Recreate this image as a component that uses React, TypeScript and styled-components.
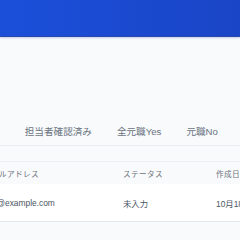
import styled, { createGlobalStyle } from "styled-components";

const Global = createGlobalStyle`
  html, body {
    margin: 0;
    padding: 0;
    background: #f8fafc;
    overflow: hidden;
  }
  body {
    font-family: "Liberation Sans", "Noto Sans CJK JP", sans-serif;
  }
`;

const Header = styled.header`
  height: 36px;
  background: linear-gradient(to right, #1b4fda, #1a45c6);
  border-bottom: 1px solid #2a4aa9;
  box-shadow: 0 1px 2px rgba(30, 64, 175, 0.25);
`;

const Main = styled.main`
  margin-left: -29px;
  width: 420px;
  padding-top: 88px;
`;

const Tabs = styled.nav`
  display: flex;
  column-gap: 25px;
  border-bottom: 1px solid #e8ebef;
`;

const Tab = styled.button<{ $active?: boolean }>`
  border: none;
  background: none;
  padding: 0 0 6px;
  font-family: inherit;
  font-size: 9.6px;
  line-height: 14px;
  white-space: nowrap;
  color: ${(p) => (p.$active ? "#1d4ed8" : "#6b7280")};
`;

const Card = styled.div`
  margin-top: 15px;
  background: #fff;
  border-top: 1px solid #eef0f3;
  border-bottom: 1px solid #e5e7eb;
`;

const Table = styled.table`
  border-collapse: collapse;
  table-layout: fixed;
  width: 420px;
`;

const Th = styled.th<{ $w: number }>`
  width: ${(p) => p.$w - 12}px;
  height: 22px;
  padding: 0 0 0 12px;
  background: #f9fafb;
  text-align: left;
  font-weight: 400;
  font-size: 7.6px;
  letter-spacing: 0.4px;
  color: #6b7280;
  white-space: nowrap;
`;

const Td = styled.td`
  height: 37px;
  padding: 0 0 0 12px;
  font-size: 8.4px;
  color: #4b5563;
  white-space: nowrap;
`;

export default function App() {
  return (
    <>
      <Global />
      <Header />
      <Main>
        <Tabs>
          <Tab>未確認</Tab>
          <Tab>担当者確認済み</Tab>
          <Tab>全元職Yes</Tab>
          <Tab>元職No</Tab>
        </Tabs>
        <Card>
          <Table>
            <thead>
              <tr>
                <Th $w={140}>メールアドレス</Th>
                <Th $w={93}>ステータス</Th>
                <Th $w={187}>作成日</Th>
              </tr>
            </thead>
            <tbody>
              <tr>
                <Td>test@example.com</Td>
                <Td>未入力</Td>
                <Td>10月18日</Td>
              </tr>
            </tbody>
          </Table>
        </Card>
      </Main>
    </>
  );
}
